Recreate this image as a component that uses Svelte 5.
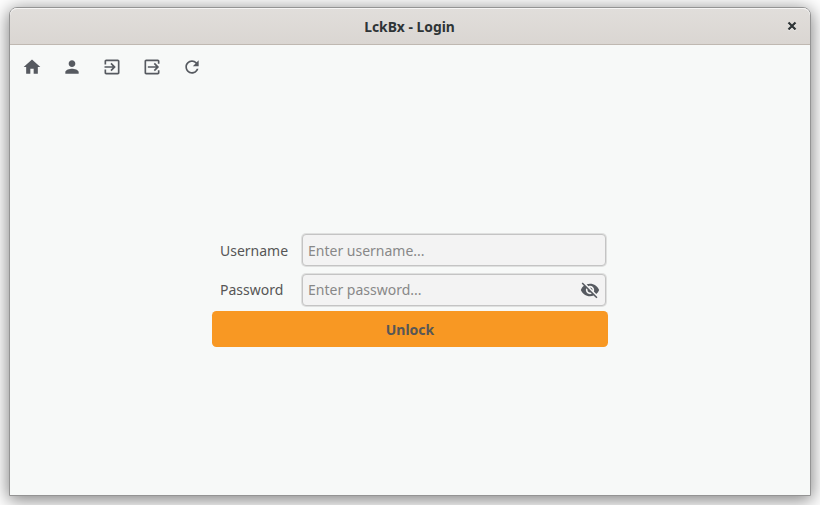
<script>
  const tools = [
    { label: 'Home', path: 'M10 20v-6h4v6h5v-8h3L12 3 2 12h3v8z' },
    { label: 'Account', path: 'M12 12c2.21 0 4-1.79 4-4s-1.79-4-4-4-4 1.79-4 4 1.79 4 4 4zm0 2c-2.67 0-8 1.34-8 4v2h16v-2c0-2.66-5.33-4-8-4z' },
    { label: 'Log in', path: 'M10.09 15.59L11.5 17l5-5-5-5-1.41 1.41L12.67 11H3v2h9.67l-2.58 2.59zM19 3H5c-1.11 0-2 .9-2 2v4h2V5h14v14H5v-4H3v4c0 1.1.89 2 2 2h14c1.1 0 2-.9 2-2V5c0-1.1-.9-2-2-2z' },
    { label: 'Log out', path: 'M14.09 15.59L15.5 17l5-5-5-5-1.41 1.41L16.67 11H7v2h9.67l-2.58 2.59zM5 3h14c1.11 0 2 .9 2 2v3h-2V5H5v14h14v-3h2v3c0 1.1-.89 2-2 2H5c-1.1 0-2-.9-2-2V5c0-1.1.9-2 2-2z' },
    { label: 'Refresh', path: 'M17.65 6.35C16.2 4.9 14.21 4 12 4c-4.42 0-7.99 3.58-7.99 8s3.57 8 7.99 8c3.73 0 6.84-2.55 7.73-6h-2.08c-.82 2.33-3.04 4-5.65 4-3.31 0-6-2.69-6-6s2.69-6 6-6c1.66 0 3.14.69 4.22 1.78L13 11h7V4l-2.35 2.35z' }
  ];
  const hidden = 'M12 7c2.76 0 5 2.24 5 5 0 .65-.13 1.26-.36 1.83l2.92 2.92c1.51-1.26 2.7-2.89 3.43-4.75-1.73-4.39-6-7.5-11-7.5-1.4 0-2.74.25-3.98.7l2.16 2.16C10.74 7.13 11.35 7 12 7zM2 4.27l2.28 2.28.46.46C3.08 8.3 1.78 10.02 1 12c1.73 4.39 6 7.5 11 7.5 1.55 0 3.03-.3 4.38-.84l.42.42L19.73 22 21 20.73 3.27 3 2 4.27zM7.53 9.8l1.55 1.55c-.05.21-.08.43-.08.65 0 1.66 1.34 3 3 3 .22 0 .44-.03.65-.08l1.55 1.55c-.67.33-1.41.53-2.2.53-2.76 0-5-2.24-5-5 0-.79.2-1.53.53-2.2zm4.31-.78l3.15 3.15.02-.16c0-1.66-1.34-3-3-3l-.17.01z';
</script>

<main class="desktop">
  <section class="window">
    <header>
      <h1>LckBx - Login</h1>
      <button class="close" aria-label="Close">
        <svg width="10" height="10" viewBox="0 0 10 10"><path d="M1.5 1.5l7 7M8.5 1.5l-7 7" /></svg>
      </button>
    </header>
    <nav>
      {#each tools as tool}
        <button class="tool" aria-label={tool.label}>
          <svg width="20" height="20" viewBox="0 0 24 24"><path d={tool.path} /></svg>
        </button>
      {/each}
    </nav>
    <form>
      <div class="row user">
        <label for="user">Username</label>
        <div class="field"><input id="user" placeholder="Enter username..." /></div>
      </div>
      <div class="row">
        <label for="pass">Password</label>
        <div class="field">
          <input id="pass" type="password" placeholder="Enter password..." />
          <button type="button" class="reveal" aria-label="Show password">
            <svg width="20" height="20" viewBox="0 0 24 24"><path d={hidden} /></svg>
          </button>
        </div>
      </div>
      <button type="button" class="unlock">Unlock</button>
    </form>
  </section>
</main>

<style>
  .desktop {
    box-sizing: border-box;
    width: 820px;
    height: 505px;
    padding: 7px 9px 9px;
    overflow: hidden;
    background: #fff;
    font-family: "Noto Sans", sans-serif;
  }
  .window {
    box-sizing: border-box;
    width: 802px;
    height: 489px;
    border: 1px solid #949494;
    border-radius: 8px 8px 0 0;
    background: #f7f9f8;
    box-shadow: 0 3px 18px 1px rgba(0, 0, 0, 0.5);
    display: flex;
    flex-direction: column;
  }
  button {
    border: 0;
    padding: 0;
    background: none;
    font: inherit;
    display: flex;
    align-items: center;
    justify-content: center;
  }
  svg { display: block; fill: #565a60; }
  header {
    box-sizing: border-box;
    height: 37px;
    flex: none;
    display: grid;
    grid-template-columns: 36px 1fr 36px;
    border-bottom: 1px solid #bfb8b1;
    border-radius: 7px 7px 0 0;
    background: linear-gradient(#e1dedb, #dad6d2);
    box-shadow: inset 0 1px #f6f5f4;
  }
  h1 {
    grid-column: 2;
    margin: 0;
    text-align: center;
    font: 700 14.67px/37px "Noto Sans", sans-serif;
    transform: translateX(-0.5px) scaleX(0.945);
    color: #2e3436;
  }
  .close svg {
    position: relative;
    top: -1px;
    fill: none;
    stroke: #2e3436;
    stroke-width: 2.2;
    filter: drop-shadow(0 1px #f0eeec);
  }
  nav {
    display: flex;
    gap: 20px;
    height: 20px;
    padding: 12px;
  }
  form {
    width: 396px;
    margin: 144px auto 0;
  }
  .row {
    display: flex;
    align-items: center;
    height: 34px;
    margin-bottom: 4px;
  }
  .row.user { margin-bottom: 6px; }
  .user label, .user input { padding-top: 2px; }
  label {
    box-sizing: border-box;
    width: 90px;
    padding-left: 8px;
    font-size: 14px;
    line-height: 20px;
    color: #565656;
  }
  .field {
    box-sizing: border-box;
    width: 304px;
    height: 32px;
    display: flex;
    align-items: center;
    border: 1px solid #c4c4c4;
    border-radius: 4px;
    box-shadow: 0 0 0 1px #dfe0df;
    background: #f3f3f3;
    padding: 0 5px;
  }
  input {
    flex: 1;
    min-width: 0;
    height: 20px;
    padding: 0;
    border: 0;
    outline: 0;
    background: none;
    font: 14px/20px "Noto Sans", sans-serif;
  }
  input::placeholder { color: #888; opacity: 1; }
  .unlock {
    box-sizing: border-box;
    width: 396px;
    height: 36px;
    padding-top: 2px;
    border-radius: 4.5px;
    background: #f89823;
    color: #565656;
    font-weight: 700;
    font-size: 14px;
    line-height: 20px;
  }
</style>
